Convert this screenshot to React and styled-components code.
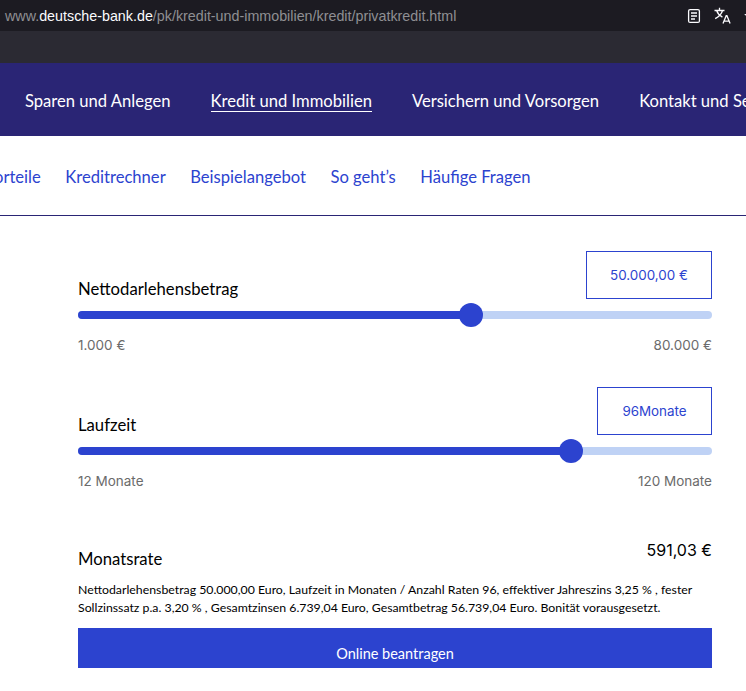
import React from 'react';
import styled, { createGlobalStyle } from 'styled-components';

const Global = createGlobalStyle`
  html, body {
    margin: 0;
    padding: 0;
    background: #fff;
  }
  body {
    font-family: "Lato", "Noto Sans", sans-serif;
  }
`

const Page = styled.div`
  width: 746px;
  height: 691px;
  overflow: hidden;
  background: #fff;
`
const UrlBar = styled.div`
  height: 31px;
  background: #1c1b22;
  display: flex;
  align-items: center;
  justify-content: space-between;
  padding-left: 5px;
  overflow: hidden;
`
const Url = styled.div`
  font-family: "Liberation Sans", sans-serif;
  font-size: 14.3px;
  color: #8f8f93;
  white-space: nowrap;
  b {
    font-weight: 400;
    color: #fbfbfe;
  }
`
const BarIcons = styled.div`
  display: flex;
  align-items: center;
  gap: 13px;
  margin-right: -14px;
  color: #fbfbfe;
`
const Toolbar = styled.div`
  height: 32px;
  background: #2b2a33;
`
const MainNav = styled.nav`
  height: 73px;
  box-sizing: border-box;
  padding: 4px 0 0 25px;
  background: #2a2575;
  display: flex;
  align-items: center;
  gap: 40px;
  white-space: nowrap;
`
const MainLink = styled.a`
  font-size: 16.6px;
  line-height: 19px;
  color: #fff;
  border-bottom: 1px solid ${(p) => (p.$active ? '#fff' : 'transparent')};
`
const SubNav = styled.nav`
  height: 80px;
  box-sizing: border-box;
  padding-top: 2px;
  border-bottom: 1px solid #2a2575;
  display: flex;
  align-items: center;
  gap: 24.5px;
  margin-left: -16px;
  white-space: nowrap;
`
const SubLink = styled.a`
  font-size: 16.6px;
  color: #2c43cf;
`
const Content = styled.div`
  padding: 35px 34px 0 78px;
`
const SliderBlock = styled.div`
  margin-bottom: ${(p) => p.$gap}px;
`
const SliderHead = styled.div`
  display: flex;
  justify-content: space-between;
  align-items: flex-end;
  margin-bottom: 12px;
`
const Label = styled.div`
  font-size: 16.7px;
  line-height: 20px;
  color: #000;
`
const ValueBox = styled.div`
  box-sizing: border-box;
  width: ${(p) => p.$width}px;
  height: 48px;
  border: 1px solid #2c43cf;
  display: flex;
  align-items: center;
  justify-content: center;
  font-family: "Inter", sans-serif;
  font-size: 13.4px;
  color: #2c43cf;
`
const Track = styled.div`
  position: relative;
  height: 8px;
  border-radius: 4px;
  background: #bfd2f5;
`
const Fill = styled.div`
  height: 8px;
  border-radius: 4px;
  background: #2c43cf;
`
const Thumb = styled.div`
  position: absolute;
  top: -8px;
  width: 24px;
  height: 24px;
  margin-left: -12px;
  border-radius: 50%;
  background: #2c43cf;
`
const Limits = styled.div`
  display: flex;
  justify-content: space-between;
  margin-top: 17px;
  font-family: "Inter", sans-serif;
  font-size: 13.5px;
  line-height: 18px;
  color: #6b6b6b;
`
const RateRow = styled.div`
  display: flex;
  justify-content: space-between;
  align-items: flex-start;
`
const RateLabel = styled(Label)`
  padding-top: 9px;
`
const RateValue = styled.div`
  font-family: "Inter", sans-serif;
  font-size: 16px;
  line-height: 20px;
  color: #000;
`
const Note = styled.p`
  margin: 12px 0 11px;
  font-size: 12.3px;
  line-height: 18px;
  color: #000;
  white-space: nowrap;
`
const Apply = styled.div`
  height: 40px;
  box-sizing: border-box;
  padding-top: 10px;
  background: #2c43cf;
  color: #fff;
  font-size: 14.5px;
  display: flex;
  align-items: center;
  justify-content: center;
`

const ReaderIcon = () => (
  <svg width="14" height="16" viewBox="0 0 14 16" fill="none" stroke="currentColor" strokeWidth="1.3">
    <rect x="1.6" y="1.6" width="10.8" height="12.8" rx="1.5" />
    <path d="M4 5h6M4 8h6M4 11h4" />
  </svg>
)

const TranslateIcon = () => (
  <svg width="17" height="17" viewBox="0 0 17 17" fill="none" stroke="currentColor" strokeWidth="1.3">
    <path d="M0.5 3.5h10M5.5 0.8v2.7M8.6 3.5C7.5 7 5 9.6 1.2 11.6M2.6 3.5c1 3 3.2 5.2 5.8 6.6" />
    <path d="M9 16.5l3.2-7.8h.7l3.2 7.8M10 14.2h5" />
  </svg>
)

const SideIcon = () => (
  <svg width="16" height="16" viewBox="0 0 16 16" fill="none" stroke="currentColor" strokeWidth="1.3">
    <path d="M8 2l2 4 4.4.6-3.2 3 .8 4.4L8 12l-4 2 .8-4.4-3.2-3L6 6z" />
  </svg>
)

const Slider = ({ label, value, boxWidth, min, max, percent, gap }) => (
  <SliderBlock $gap={gap}>
    <SliderHead>
      <Label>{label}</Label>
      <ValueBox $width={boxWidth}>{value}</ValueBox>
    </SliderHead>
    <Track>
      <Fill style={{ width: `${percent}%` }} />
      <Thumb style={{ left: `${percent}%` }} />
    </Track>
    <Limits>
      <span>{min}</span>
      <span>{max}</span>
    </Limits>
  </SliderBlock>
)

export default function App() {
  return (
    <Page>
      <Global />
      <UrlBar>
        <Url>
          www.<b>deutsche-bank.de</b>/pk/kredit-und-immobilien/kredit/privatkredit.html
        </Url>
        <BarIcons>
          <ReaderIcon />
          <TranslateIcon />
          <SideIcon />
        </BarIcons>
      </UrlBar>
      <Toolbar />
      <MainNav>
        <MainLink>Sparen und Anlegen</MainLink>
        <MainLink $active>Kredit und Immobilien</MainLink>
        <MainLink>Versichern und Vorsorgen</MainLink>
        <MainLink>Kontakt und Service</MainLink>
      </MainNav>
      <SubNav>
        <SubLink>Vorteile</SubLink>
        <SubLink>Kreditrechner</SubLink>
        <SubLink>Beispielangebot</SubLink>
        <SubLink>So geht’s</SubLink>
        <SubLink>Häufige Fragen</SubLink>
      </SubNav>
      <Content>
        <Slider
          label="Nettodarlehensbetrag"
          value="50.000,00 €"
          boxWidth={126}
          min="1.000 €"
          max="80.000 €"
          percent={62}
          gap={33}
        />
        <Slider
          label="Laufzeit"
          value="96Monate"
          boxWidth={115}
          min="12 Monate"
          max="120 Monate"
          percent={77.76}
          gap={50}
        />
        <RateRow>
          <RateLabel>Monatsrate</RateLabel>
          <RateValue>591,03 €</RateValue>
        </RateRow>
        <Note>
          Nettodarlehensbetrag 50.000,00 Euro, Laufzeit in Monaten / Anzahl Raten 96, effektiver Jahreszins 3,25 % , fester
          <br />
          Sollzinssatz p.a. 3,20 % , Gesamtzinsen 6.739,04 Euro, Gesamtbetrag 56.739,04 Euro. Bonität vorausgesetzt.
        </Note>
        <Apply>Online beantragen</Apply>
      </Content>
    </Page>
  );
}
